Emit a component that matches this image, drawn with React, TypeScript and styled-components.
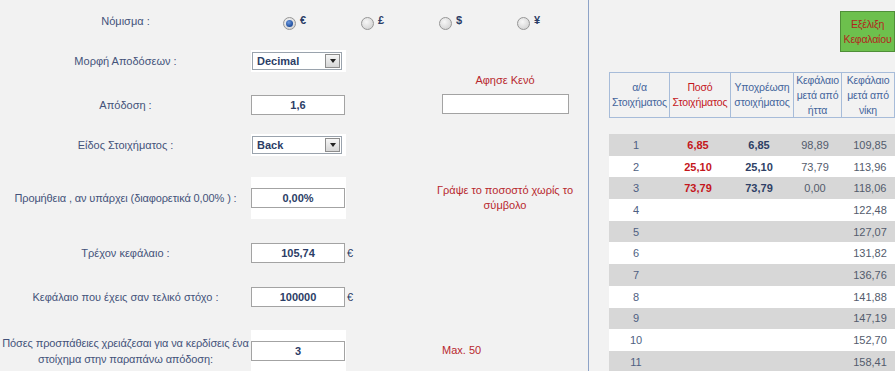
import styled, { createGlobalStyle } from "styled-components";

const GlobalStyle = createGlobalStyle`
  html, body {
    margin: 0;
    padding: 0;
    background: #f2f2f2;
  }
  body {
    font-family: "Liberation Sans", Arial, sans-serif;
    font-size: 11px;
    overflow: hidden;
  }
`;

const Page = styled.div`
  display: flex;
  width: 895px;
  height: 371px;
  overflow: hidden;
  background: #f2f2f2;
`;

const FormPanel = styled.div`
  width: 588px;
  flex-shrink: 0;
  border-right: 1px solid #8ea3c7;
  display: flex;
  flex-direction: column;
`;

const FormRow = styled.div<{ $h: number }>`
  display: flex;
  align-items: center;
  height: ${(p) => p.$h}px;
  flex-shrink: 0;
`;

const Label = styled.div<{ $tight?: boolean }>`
  width: 251px;
  flex-shrink: 0;
  text-align: center;
  color: #44527a;
  line-height: 16px;
  white-space: nowrap;
  letter-spacing: ${(p) => (p.$tight ? "-0.12px" : "normal")};
`;

const FieldCell = styled.div<{ $white?: boolean; $h?: number }>`
  width: 95px;
  height: ${(p) => p.$h ?? 22}px;
  flex-shrink: 0;
  display: flex;
  align-items: center;
  background: ${(p) => (p.$white ? "#fff" : "transparent")};
`;

const UnitCell = styled.div`
  width: 94px;
  flex-shrink: 0;
  padding-left: 1px;
  box-sizing: border-box;
  color: #2b3d66;
`;

const NoteCell = styled.div<{ $align?: "left" | "center"; $bottom?: boolean }>`
  width: 130px;
  flex-shrink: 0;
  display: flex;
  flex-direction: column;
  align-items: ${(p) => (p.$align === "left" ? "flex-start" : "center")};
  align-self: ${(p) => (p.$bottom ? "flex-end" : "center")};
  padding-bottom: ${(p) => (p.$bottom ? 15 : 0)}px;
  padding-left: ${(p) => (p.$align === "left" ? 2 : 0)}px;
  box-sizing: border-box;
`;

const NoteText = styled.div<{ $gap?: number }>`
  color: #b8282e;
  line-height: 15px;
  text-align: center;
  white-space: nowrap;
  margin-bottom: ${(p) => p.$gap ?? 0}px;
`;

const TextField = styled.input<{ $w?: number }>`
  width: ${(p) => p.$w ?? 94}px;
  height: 20px;
  box-sizing: border-box;
  margin: 0;
  padding: 0;
  border: 1px solid #a3a3a3;
  background: #fff;
  text-align: center;
  font-family: "Liberation Sans", Arial, sans-serif;
  font-size: 11px;
  font-weight: bold;
  color: #2b3d66;
  outline: none;
`;

const SelectBox = styled.div`
  width: 90px;
  height: 18px;
  margin-left: 1px;
  box-sizing: border-box;
  border: 1px solid #9aa3ad;
  background: #fff;
  display: flex;
  align-items: center;
  justify-content: space-between;
  padding-left: 4px;
  font-weight: bold;
  color: #2b3d66;
`;

const SelectArrow = styled.div`
  width: 15px;
  height: 14px;
  margin-right: 1px;
  box-sizing: border-box;
  border: 1px solid #8d8d8d;
  background: linear-gradient(#f6f6f6, #d6d6d6);
  display: flex;
  align-items: center;
  justify-content: center;

  &::after {
    content: "";
    border-left: 3.5px solid transparent;
    border-right: 3.5px solid transparent;
    border-top: 4px solid #222;
  }
`;

const CurrencyList = styled.div`
  display: flex;
  padding-left: 32px;
`;

const CurrencyOption = styled.label`
  width: 78px;
  display: flex;
  align-items: center;
  gap: 4px;
`;

const Radio = styled.span<{ $checked?: boolean }>`
  width: 13px;
  height: 13px;
  margin-top: 4px;
  box-sizing: border-box;
  border-radius: 50%;
  border: 1px solid #969696;
  background: radial-gradient(circle at 40% 35%, #f7f7f7, #cbcbcb);
  display: flex;
  align-items: center;
  justify-content: center;

  &::after {
    content: "";
    display: ${(p) => (p.$checked ? "block" : "none")};
    width: 7px;
    height: 7px;
    border-radius: 50%;
    background: radial-gradient(circle at 40% 35%, #6f9be0, #1d4c9c 70%);
  }
`;

const Symbol = styled.span`
  font-weight: bold;
  color: #2b3d66;
  margin-bottom: 2px;
`;

const SidePanel = styled.div`
  flex: 1;
  min-width: 0;
  overflow: hidden;
  padding: 11px 0 0 20px;
  display: flex;
  flex-direction: column;
`;

const ButtonRow = styled.div`
  display: flex;
  justify-content: flex-end;
`;

const GrowthButton = styled.button`
  width: 55px;
  height: 41px;
  margin: 0;
  padding: 0;
  box-sizing: border-box;
  background: #6dc04d;
  border: 1px solid #4f8f38;
  color: #b3261e;
  font-family: "Liberation Sans", Arial, sans-serif;
  font-size: 10.5px;
  letter-spacing: -0.2px;
  line-height: 15px;
  white-space: nowrap;
`;

const HeadGrid = styled.div`
  margin-top: 20px;
  display: grid;
  grid-template-columns: 60px 61px 63px 48px 53px;
  border-top: 1px solid #a7bcd9;
  border-left: 1px solid #a7bcd9;
  width: max-content;
`;

const HeadCell = styled.div<{ $red?: boolean }>`
  height: 45px;
  box-sizing: border-box;
  border-right: 1px solid #a7bcd9;
  border-bottom: 1px solid #a7bcd9;
  display: flex;
  align-items: center;
  justify-content: center;
  text-align: center;
  font-size: 10.5px;
  letter-spacing: -0.15px;
  line-height: 15px;
  white-space: nowrap;
  overflow: hidden;
  color: ${(p) => (p.$red ? "#c4161c" : "#44659c")};
`;

const DataList = styled.div`
  margin-top: 16px;
  display: flex;
  flex-direction: column;
`;

const DataRow = styled.div<{ $shade: boolean }>`
  display: grid;
  grid-template-columns: 54px 70px 52px 60px 50px;
  height: 21.7px;
  flex-shrink: 0;
  align-items: center;
  background: ${(p) => (p.$shade ? "#d7d7d7" : "#fff")};
`;

const DataCell = styled.div<{ $tone: "index" | "stake" | "liability" | "plain" }>`
  text-align: center;
  font-weight: ${(p) => (p.$tone === "stake" || p.$tone === "liability" ? "bold" : "normal")};
  color: ${(p) =>
    p.$tone === "stake"
      ? "#c4161c"
      : p.$tone === "liability"
      ? "#2e3f66"
      : p.$tone === "index"
      ? "#4f5f82"
      : "#535b6c"};
`;

const rows = [
  ["1", "6,85", "6,85", "98,89", "109,85"],
  ["2", "25,10", "25,10", "73,79", "113,96"],
  ["3", "73,79", "73,79", "0,00", "118,06"],
  ["4", "", "", "", "122,48"],
  ["5", "", "", "", "127,07"],
  ["6", "", "", "", "131,82"],
  ["7", "", "", "", "136,76"],
  ["8", "", "", "", "141,88"],
  ["9", "", "", "", "147,19"],
  ["10", "", "", "", "152,70"],
  ["11", "", "", "", "158,41"],
];

const currencies = ["€", "£", "$", "¥"];

const App = () => {
  return (
    <>
      <GlobalStyle />
      <Page>
        <FormPanel>
          <FormRow $h={42}>
            <Label>Νόμισμα :</Label>
            <CurrencyList>
              {currencies.map((c, i) => (
                <CurrencyOption key={c}>
                  <Radio $checked={i === 0} />
                  <Symbol>{c}</Symbol>
                </CurrencyOption>
              ))}
            </CurrencyList>
          </FormRow>

          <FormRow $h={38}>
            <Label>Μορφή Αποδόσεων :</Label>
            <FieldCell $white>
              <SelectBox>
                Decimal
                <SelectArrow />
              </SelectBox>
            </FieldCell>
          </FormRow>

          <FormRow $h={49}>
            <Label>Απόδοση :</Label>
            <FieldCell>
              <TextField readOnly value="1,6" />
            </FieldCell>
            <UnitCell />
            <NoteCell $bottom>
              <NoteText $gap={6}>Αφησε Κενό</NoteText>
              <TextField readOnly value="" $w={127} />
            </NoteCell>
          </FormRow>

          <FormRow $h={32}>
            <Label>Είδος Στοιχήματος :</Label>
            <FieldCell $white>
              <SelectBox>
                Back
                <SelectArrow />
              </SelectBox>
            </FieldCell>
          </FormRow>

          <FormRow $h={74}>
            <Label $tight>Προμήθεια , αν υπάρχει (διαφορετικά 0,00% ) :</Label>
            <FieldCell $white $h={42}>
              <TextField readOnly value="0,00%" />
            </FieldCell>
            <UnitCell />
            <NoteCell>
              <NoteText>
                Γράψε το ποσοστό χωρίς το
                <br />
                σύμβολο
              </NoteText>
            </NoteCell>
          </FormRow>

          <FormRow $h={35}>
            <Label>Τρέχον κεφάλαιο :</Label>
            <FieldCell>
              <TextField readOnly value="105,74" />
            </FieldCell>
            <UnitCell>€</UnitCell>
          </FormRow>

          <FormRow $h={54}>
            <Label>Κεφάλαιο που έχεις σαν τελικό στόχο :</Label>
            <FieldCell>
              <TextField readOnly value="100000" />
            </FieldCell>
            <UnitCell>€</UnitCell>
          </FormRow>

          <FormRow $h={53}>
            <Label $tight>
              Πόσες προσπάθειες χρειάζεσαι για να κερδίσεις ένα
              <br />
              στοίχημα στην παραπάνω απόδοση:
            </Label>
            <FieldCell $white $h={42}>
              <TextField readOnly value="3" />
            </FieldCell>
            <UnitCell />
            <NoteCell $align="left">
              <NoteText>Max. 50</NoteText>
            </NoteCell>
          </FormRow>
        </FormPanel>

        <SidePanel>
          <ButtonRow>
            <GrowthButton>
              Εξέλιξη
              <br />
              Κεφαλαίου
            </GrowthButton>
          </ButtonRow>

          <HeadGrid>
            <HeadCell>
              α/α
              <br />
              Στοιχήματος
            </HeadCell>
            <HeadCell $red>
              Ποσό
              <br />
              Στοιχήματος
            </HeadCell>
            <HeadCell>
              Υποχρέωση
              <br />
              στοιχήματος
            </HeadCell>
            <HeadCell>
              Κεφάλαιο
              <br />
              μετά από
              <br />
              ήττα
            </HeadCell>
            <HeadCell>
              Κεφάλαιο
              <br />
              μετά από
              <br />
              νίκη
            </HeadCell>
          </HeadGrid>

          <DataList>
            {rows.map((r, i) => (
              <DataRow key={r[0]} $shade={i % 2 === 0}>
                <DataCell $tone="index">{r[0]}</DataCell>
                <DataCell $tone="stake">{r[1]}</DataCell>
                <DataCell $tone="liability">{r[2]}</DataCell>
                <DataCell $tone="plain">{r[3]}</DataCell>
                <DataCell $tone="plain">{r[4]}</DataCell>
              </DataRow>
            ))}
          </DataList>
        </SidePanel>
      </Page>
    </>
  );
};

export default App;
